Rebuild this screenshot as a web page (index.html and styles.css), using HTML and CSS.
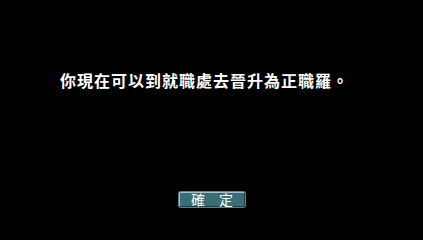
FILE: index.html
```html
<!DOCTYPE html>
<html lang="zh-Hant">
<head>
<meta charset="utf-8">
<link rel="stylesheet" href="styles.css">
</head>
<body>
<div class="dialog">
  <p class="message">你現在可以到就職處去晉升為正職羅。</p>
  <div class="actions">
    <button class="ok">確　定</button>
  </div>
</div>
</body>
</html>
```
FILE: styles.css
```css
html, body {
  margin: 0;
  padding: 0;
  background: #000;
}
.dialog {
  width: 423px;
  height: 221px;
  display: flex;
  flex-direction: column;
  box-sizing: border-box;
  padding-top: 72px;
}
.message {
  margin: 0 0 0 60px;
  color: #fff;
  font-family: "Noto Sans CJK TC", "Noto Sans CJK SC", sans-serif;
  font-weight: 700;
  font-size: 16px;
  line-height: 16px;
  letter-spacing: 1px;
}
.actions {
  margin-top: auto;
  margin-bottom: 14px;
  display: flex;
  padding-left: 179px;
}
.ok {
  width: 66px;
  height: 15px;
  box-sizing: border-box;
  padding: 0;
  margin: 0;
  background: #3a6e77;
  border-top: 1px solid #a9bfc3;
  border-left: 1px solid #a9bfc3;
  border-right: 1px solid #1d3a40;
  border-bottom: 1px solid #1d3a40;
  border-radius: 2px;
  box-shadow: 0 0 0 1px #5d7f85;
  color: #fff;
  font-family: "Noto Sans CJK TC", "Noto Sans CJK SC", sans-serif;
  font-size: 14px;
  line-height: 13px;
  font-weight: 400;
  text-align: center;
}
```
